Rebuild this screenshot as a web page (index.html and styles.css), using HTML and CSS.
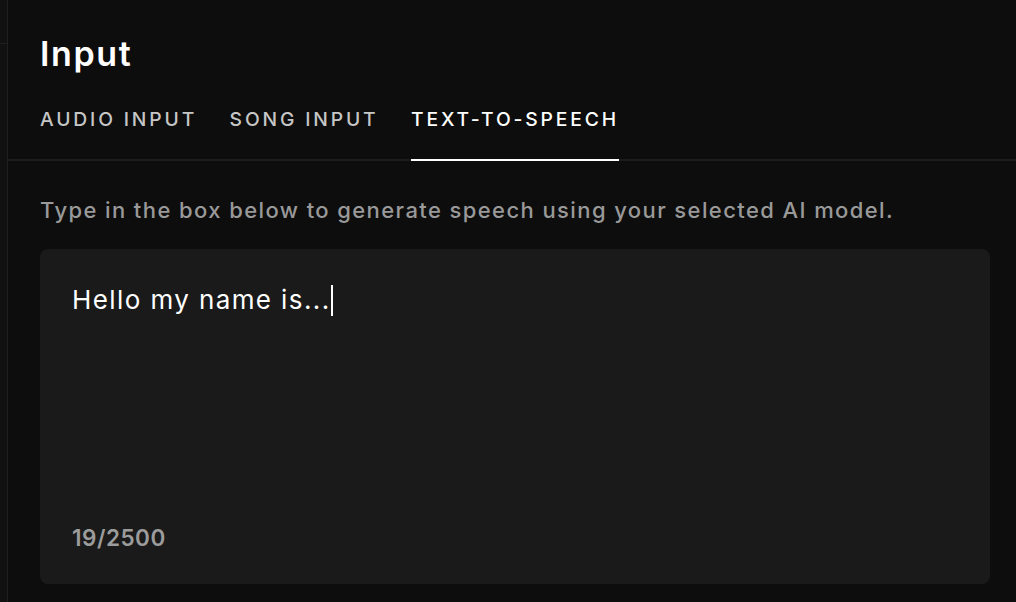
FILE: index.html
```html
<!DOCTYPE html>
<html lang="en">
<head>
<meta charset="utf-8">
<title>Input</title>
<link rel="stylesheet" href="styles.css">
</head>
<body>
<div class="app">
  <aside class="side">
    <div class="side-top"></div>
  </aside>
  <main class="panel">
    <header class="head">
      <h1 class="title">Input</h1>
      <nav class="tabs">
        <span class="tab">AUDIO INPUT</span>
        <span class="tab">SONG INPUT</span>
        <span class="tab active">TEXT-TO-SPEECH</span>
      </nav>
    </header>
    <section class="body">
      <p class="hint">Type in the box below to generate speech using your selected AI model.</p>
      <div class="box">
        <div class="typed">Hello my name is...<span class="caret"></span></div>
        <div class="count">19/2500</div>
      </div>
    </section>
  </main>
</div>
</body>
</html>
```
FILE: styles.css
```css
* { box-sizing: border-box; }
html, body { margin: 0; height: 100%; }
body {
  background: #0d0d0d;
  font-family: Inter, "Noto Sans", sans-serif;
  color: #fff;
  overflow: hidden;
}
.app { display: flex; height: 602px; }
.side {
  width: 8px;
  flex: none;
  background: #111111;
  border-right: 1px solid #1f1f1f;
}
.side-top { height: 44px; border-bottom: 1px solid #1f1f1f; }
.panel { flex: 1; display: flex; flex-direction: column; }
.head {
  padding: 0 32px;
  border-bottom: 2px solid #1c1c1c;
}
.title {
  margin: 0;
  padding-top: 34px;
  font-size: 34px;
  line-height: 40px;
  font-weight: 600;
  letter-spacing: 1.6px;
}
.tabs { display: flex; gap: 32.5px; margin-top: 33px; }
.tab {
  font-size: 19.3px;
  line-height: 24px;
  font-weight: 500;
  letter-spacing: 2.85px;
  color: #c6c6c6;
  padding-bottom: 28px;
  margin-bottom: -2px;
  border-bottom: 2px solid transparent;
}
.tab.active { color: #fff; border-bottom-color: #fff; }
.body { padding: 36px 26px 0 32px; }
.hint {
  margin: 0 0 26px;
  font-size: 22px;
  line-height: 26px;
  font-weight: 500;
  letter-spacing: 1.4px;
  color: #999999;
}
.box {
  background: #1a1a1a;
  border-radius: 8px;
  height: 335px;
  padding: 31px 32px 0;
  display: flex;
  flex-direction: column;
  justify-content: space-between;
}
.typed {
  font-size: 26px;
  line-height: 40px;
  letter-spacing: 1.4px;
  color: #fff;
  display: flex;
  align-items: center;
}
.caret { display: inline-block; width: 2px; height: 31px; background: #fff; margin-left: 0; }
.count {
  font-size: 22.5px;
  line-height: 26px;
  font-weight: 600;
  letter-spacing: 0.5px;
  color: #9c9c9c;
  padding-bottom: 33px;
}
```
